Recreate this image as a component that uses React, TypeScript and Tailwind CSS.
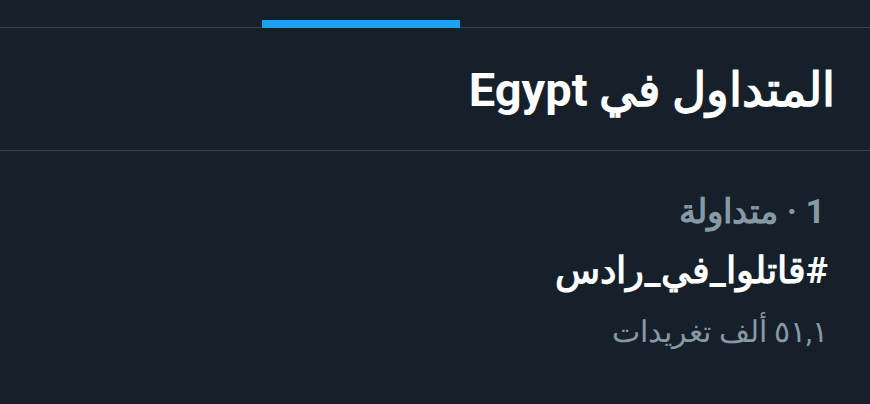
export default function App() {
  return (
    <div className="w-[870px] h-[404px] bg-[#16202b] overflow-hidden" style={{ fontFamily: 'Roboto, sans-serif' }}>
      <div className="h-[28px] border-b border-[#38444d] flex">
        <div className="w-[198px] h-[8px] mt-[20px] ml-[262px] bg-[#1da1f2]" />
      </div>
      <div dir="rtl">
        <div className="h-[123px] border-b border-[#38444d] flex items-center pr-[35px]">
          <h1 className="text-[47px] font-bold text-white leading-none">المتداول في Egypt</h1>
        </div>
        <div className="pr-[45px] pt-[38px] flex flex-col">
          <div className="text-[34px] font-bold text-[#8899a6] leading-[44px]">1 · متداولة</div>
          <div className="mt-[3px] -mr-[3px] text-[37px] font-bold text-white leading-[70px]">#قاتلوا_في_رادس</div>
          <div className="-mr-[3px] text-[30px] text-[#8899a6] leading-[52px]">٥١,١ ألف تغريدات</div>
        </div>
      </div>
    </div>
  );
}
